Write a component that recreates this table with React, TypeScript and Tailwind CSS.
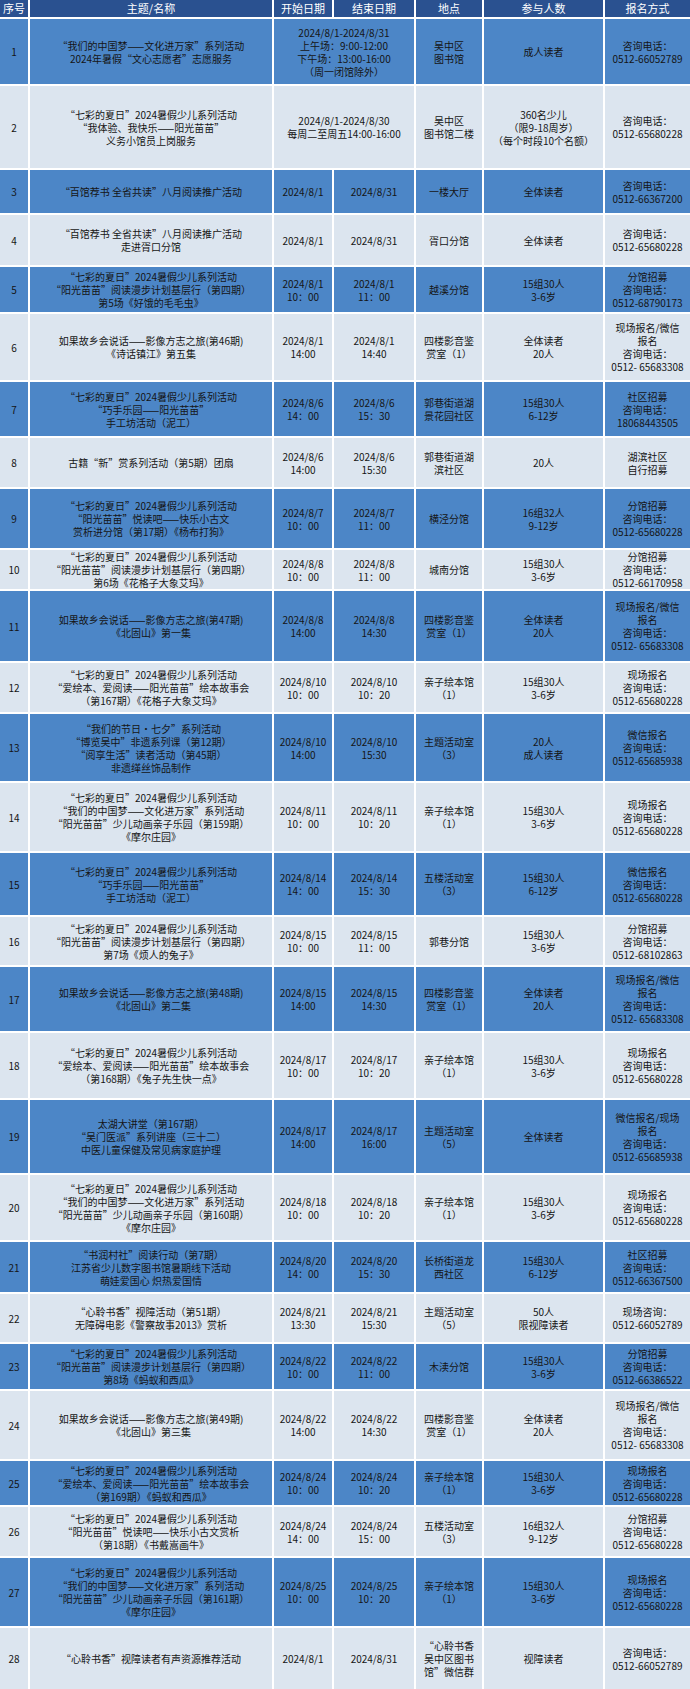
import * as React from 'react';

type Row = {
  no: string;
  h: string;
  title: string[];
  start: string[];
  end?: string[];
  place: string[];
  people: string[];
  signup: string[];
};

const rows: Row[] = [
  {
    no: '1',
    h: 'h-[65px]',
    title: ['“我们的中国梦——文化进万家”系列活动', '2024年暑假“文心志愿者”志愿服务'],
    start: ['2024/8/1-2024/8/31', '上午场：9:00-12:00', '下午场：13:00-16:00', '（周一闭馆除外）'],
    place: ['吴中区', '图书馆'],
    people: ['成人读者'],
    signup: ['咨询电话：', '0512-66052789'],
  },
  {
    no: '2',
    h: 'h-[82px]',
    title: ['“七彩的夏日”2024暑假少儿系列活动', '“我体验、我快乐——阳光苗苗”', '义务小馆员上岗服务'],
    start: ['2024/8/1-2024/8/30', '每周二至周五14:00-16:00'],
    place: ['吴中区', '图书馆二楼'],
    people: ['360名少儿', '（限9-18周岁）', '（每个时段10个名额）'],
    signup: ['咨询电话：', '0512-65680228'],
  },
  {
    no: '3',
    h: 'h-[43px]',
    title: ['“百馆荐书 全省共读”八月阅读推广活动'],
    start: ['2024/8/1'],
    end: ['2024/8/31'],
    place: ['一楼大厅'],
    people: ['全体读者'],
    signup: ['咨询电话：', '0512-66367200'],
  },
  {
    no: '4',
    h: 'h-[50px]',
    title: ['“百馆荐书 全省共读”八月阅读推广活动', '走进胥口分馆'],
    start: ['2024/8/1'],
    end: ['2024/8/31'],
    place: ['胥口分馆'],
    people: ['全体读者'],
    signup: ['咨询电话：', '0512-65680228'],
  },
  {
    no: '5',
    h: 'h-[45px]',
    title: ['“七彩的夏日”2024暑假少儿系列活动', '“阳光苗苗”阅读漫步计划基层行（第四期）', '第5场《好饿的毛毛虫》'],
    start: ['2024/8/1', '10：00'],
    end: ['2024/8/1', '11：00'],
    place: ['越溪分馆'],
    people: ['15组30人', '3-6岁'],
    signup: ['分馆招募', '咨询电话：', '0512-68790173'],
  },
  {
    no: '6',
    h: 'h-[66px]',
    title: ['如果故乡会说话——影像方志之旅(第46期)', '《诗话镇江》第五集'],
    start: ['2024/8/1', '14:00'],
    end: ['2024/8/1', '14:40'],
    place: ['四楼影音鉴', '赏室（1）'],
    people: ['全体读者', '20人'],
    signup: ['现场报名/微信', '报名', '咨询电话：', '0512- 65683308'],
  },
  {
    no: '7',
    h: 'h-[54px]',
    title: ['“七彩的夏日”2024暑假少儿系列活动', '“巧手乐园——阳光苗苗”', '手工坊活动（泥工）'],
    start: ['2024/8/6', '14：00'],
    end: ['2024/8/6', '15：30'],
    place: ['郭巷街道湖', '景花园社区'],
    people: ['15组30人', '6-12岁'],
    signup: ['社区招募', '咨询电话：', '18068443505'],
  },
  {
    no: '8',
    h: 'h-[49px]',
    title: ['古籍“新”赏系列活动（第5期）团扇'],
    start: ['2024/8/6', '14:00'],
    end: ['2024/8/6', '15:30'],
    place: ['郭巷街道湖', '滨社区'],
    people: ['20人'],
    signup: ['湖滨社区', '自行招募'],
  },
  {
    no: '9',
    h: 'h-[59px]',
    title: ['“七彩的夏日”2024暑假少儿系列活动', '“阳光苗苗”悦读吧——快乐小古文', '赏析进分馆（第17期）《杨布打狗》'],
    start: ['2024/8/7', '10：00'],
    end: ['2024/8/7', '11：00'],
    place: ['横泾分馆'],
    people: ['16组32人', '9-12岁'],
    signup: ['分馆招募', '咨询电话：', '0512-65680228'],
  },
  {
    no: '10',
    h: 'h-[39px]',
    title: ['“七彩的夏日”2024暑假少儿系列活动', '“阳光苗苗”阅读漫步计划基层行（第四期）', '第6场《花格子大象艾玛》'],
    start: ['2024/8/8', '10：00'],
    end: ['2024/8/8', '11：00'],
    place: ['城南分馆'],
    people: ['15组30人', '3-6岁'],
    signup: ['分馆招募', '咨询电话：', '0512-66170958'],
  },
  {
    no: '11',
    h: 'h-[70px]',
    title: ['如果故乡会说话——影像方志之旅(第47期)', '《北固山》第一集'],
    start: ['2024/8/8', '14:00'],
    end: ['2024/8/8', '14:30'],
    place: ['四楼影音鉴', '赏室（1）'],
    people: ['全体读者', '20人'],
    signup: ['现场报名/微信', '报名', '咨询电话：', '0512- 65683308'],
  },
  {
    no: '12',
    h: 'h-[49px]',
    title: ['“七彩的夏日”2024暑假少儿系列活动', '“爱绘本、爱阅读——阳光苗苗”绘本故事会', '（第167期）《花格子大象艾玛》'],
    start: ['2024/8/10', '10：00'],
    end: ['2024/8/10', '10：20'],
    place: ['亲子绘本馆', '（1）'],
    people: ['15组30人', '3-6岁'],
    signup: ['现场报名', '咨询电话：', '0512-65680228'],
  },
  {
    no: '13',
    h: 'h-[67px]',
    title: ['“我们的节日·七夕”系列活动', '“博览吴中”非遗系列课（第12期）', '“阅享生活”读者活动（第45期）', '非遗缂丝饰品制作'],
    start: ['2024/8/10', '14:00'],
    end: ['2024/8/10', '15:30'],
    place: ['主题活动室', '（3）'],
    people: ['20人', '成人读者'],
    signup: ['微信报名', '咨询电话：', '0512-65685938'],
  },
  {
    no: '14',
    h: 'h-[68px]',
    title: ['“七彩的夏日”2024暑假少儿系列活动', '“我们的中国梦——文化进万家”系列活动', '“阳光苗苗”少儿动画亲子乐园（第159期）', '《摩尔庄园》'],
    start: ['2024/8/11', '10：00'],
    end: ['2024/8/11', '10：20'],
    place: ['亲子绘本馆', '（1）'],
    people: ['15组30人', '3-6岁'],
    signup: ['现场报名', '咨询电话：', '0512-65680228'],
  },
  {
    no: '15',
    h: 'h-[62px]',
    title: ['“七彩的夏日”2024暑假少儿系列活动', '“巧手乐园——阳光苗苗”', '手工坊活动（泥工）'],
    start: ['2024/8/14', '14：00'],
    end: ['2024/8/14', '15：30'],
    place: ['五楼活动室', '（3）'],
    people: ['15组30人', '6-12岁'],
    signup: ['微信报名', '咨询电话：', '0512-65680228'],
  },
  {
    no: '16',
    h: 'h-[48px]',
    title: ['“七彩的夏日”2024暑假少儿系列活动', '“阳光苗苗”阅读漫步计划基层行（第四期）', '第7场《烦人的兔子》'],
    start: ['2024/8/15', '10：00'],
    end: ['2024/8/15', '11：00'],
    place: ['郭巷分馆'],
    people: ['15组30人', '3-6岁'],
    signup: ['分馆招募', '咨询电话：', '0512-68102863'],
  },
  {
    no: '17',
    h: 'h-[64px]',
    title: ['如果故乡会说话——影像方志之旅(第48期)', '《北固山》第二集'],
    start: ['2024/8/15', '14:00'],
    end: ['2024/8/15', '14:30'],
    place: ['四楼影音鉴', '赏室（1）'],
    people: ['全体读者', '20人'],
    signup: ['现场报名/微信', '报名', '咨询电话：', '0512- 65683308'],
  },
  {
    no: '18',
    h: 'h-[65px]',
    title: ['“七彩的夏日”2024暑假少儿系列活动', '“爱绘本、爱阅读——阳光苗苗”绘本故事会', '（第168期）《兔子先生快一点》'],
    start: ['2024/8/17', '10：00'],
    end: ['2024/8/17', '10：20'],
    place: ['亲子绘本馆', '（1）'],
    people: ['15组30人', '3-6岁'],
    signup: ['现场报名', '咨询电话：', '0512-65680228'],
  },
  {
    no: '19',
    h: 'h-[73px]',
    title: ['太湖大讲堂（第167期）', '“吴门医派”系列讲座（三十二）', '中医儿童保健及常见病家庭护理'],
    start: ['2024/8/17', '14:00'],
    end: ['2024/8/17', '16:00'],
    place: ['主题活动室', '（5）'],
    people: ['全体读者'],
    signup: ['微信报名/现场', '报名', '咨询电话：', '0512-65685938'],
  },
  {
    no: '20',
    h: 'h-[65px]',
    title: ['“七彩的夏日”2024暑假少儿系列活动', '“我们的中国梦——文化进万家”系列活动', '“阳光苗苗”少儿动画亲子乐园（第160期）', '《摩尔庄园》'],
    start: ['2024/8/18', '10：00'],
    end: ['2024/8/18', '10：20'],
    place: ['亲子绘本馆', '（1）'],
    people: ['15组30人', '3-6岁'],
    signup: ['现场报名', '咨询电话：', '0512-65680228'],
  },
  {
    no: '21',
    h: 'h-[50px]',
    title: ['“书润村社”阅读行动（第7期）', '江苏省少儿数字图书馆暑期线下活动', '萌娃爱国心 炽热爱国情'],
    start: ['2024/8/20', '14：00'],
    end: ['2024/8/20', '15：30'],
    place: ['长桥街道龙', '西社区'],
    people: ['15组30人', '6-12岁'],
    signup: ['社区招募', '咨询电话：', '0512-66367500'],
  },
  {
    no: '22',
    h: 'h-[48px]',
    title: ['“心聆书香”视障活动（第51期）', '无障碍电影《警察故事2013》赏析'],
    start: ['2024/8/21', '13:30'],
    end: ['2024/8/21', '15:30'],
    place: ['主题活动室', '（5）'],
    people: ['50人', '限视障读者'],
    signup: ['现场咨询：', '0512-66052789'],
  },
  {
    no: '23',
    h: 'h-[45px]',
    title: ['“七彩的夏日”2024暑假少儿系列活动', '“阳光苗苗”阅读漫步计划基层行（第四期）', '第8场《蚂蚁和西瓜》'],
    start: ['2024/8/22', '10：00'],
    end: ['2024/8/22', '11：00'],
    place: ['木渎分馆'],
    people: ['15组30人', '3-6岁'],
    signup: ['分馆招募', '咨询电话：', '0512-66386522'],
  },
  {
    no: '24',
    h: 'h-[68px]',
    title: ['如果故乡会说话——影像方志之旅(第49期)', '《北固山》第三集'],
    start: ['2024/8/22', '14:00'],
    end: ['2024/8/22', '14:30'],
    place: ['四楼影音鉴', '赏室（1）'],
    people: ['全体读者', '20人'],
    signup: ['现场报名/微信', '报名', '咨询电话：', '0512- 65683308'],
  },
  {
    no: '25',
    h: 'h-[44px]',
    title: ['“七彩的夏日”2024暑假少儿系列活动', '“爱绘本、爱阅读——阳光苗苗”绘本故事会', '（第169期）《蚂蚁和西瓜》'],
    start: ['2024/8/24', '10：00'],
    end: ['2024/8/24', '10：20'],
    place: ['亲子绘本馆', '（1）'],
    people: ['15组30人', '3-6岁'],
    signup: ['现场报名', '咨询电话：', '0512-65680228'],
  },
  {
    no: '26',
    h: 'h-[49px]',
    title: ['“七彩的夏日”2024暑假少儿系列活动', '“阳光苗苗”悦读吧——快乐小古文赏析', '（第18期）《书戴嵩画牛》'],
    start: ['2024/8/24', '14：00'],
    end: ['2024/8/24', '15：00'],
    place: ['五楼活动室', '（3）'],
    people: ['16组32人', '9-12岁'],
    signup: ['分馆招募', '咨询电话：', '0512-65680228'],
  },
  {
    no: '27',
    h: 'h-[68px]',
    title: ['“七彩的夏日”2024暑假少儿系列活动', '“我们的中国梦——文化进万家”系列活动', '“阳光苗苗”少儿动画亲子乐园（第161期）', '《摩尔庄园》'],
    start: ['2024/8/25', '10：00'],
    end: ['2024/8/25', '10：20'],
    place: ['亲子绘本馆', '（1）'],
    people: ['15组30人', '3-6岁'],
    signup: ['现场报名', '咨询电话：', '0512-65680228'],
  },
  {
    no: '28',
    h: 'h-[61px]',
    title: ['“心聆书香”视障读者有声资源推荐活动'],
    start: ['2024/8/1'],
    end: ['2024/8/31'],
    place: ['“心聆书香', '吴中区图书', '馆”微信群'],
    people: ['视障读者'],
    signup: ['咨询电话：', '0512-66052789'],
  },
];

const cols = 'grid grid-cols-[28px_242px_58px_80px_66px_119px_1fr] gap-x-[2px]';

function Cell({ lines, className = '' }: { lines: string[]; className?: string }) {
  return (
    <div className={`flex flex-col items-center justify-center text-center whitespace-nowrap ${className}`}>
      {lines.map((l, i) => (
        <span key={i}>{l}</span>
      ))}
    </div>
  );
}

export default function App() {
  return (
    <div
      className="w-[690px] bg-white flex flex-col gap-y-[2px] text-[10px] leading-[13px] text-[#151515]"
      style={{ fontFamily: '"Noto Sans CJK SC", "Liberation Sans", sans-serif' }}
    >
      <div className={`${cols} h-[17px] text-[11px] leading-[17px] text-white`}>
        {['序号', '主题/名称', '开始日期', '结束日期', '地点', '参与人数', '报名方式'].map((t) => (
          <div key={t} className="bg-[#2a5190] text-center">{t}</div>
        ))}
      </div>
      {rows.map((r, idx) => {
        const bg = idx % 2 === 0 ? 'bg-[#4c86c7]' : 'bg-[#dce5ef]';
        return (
          <div key={r.no} className={`${cols} ${r.h}`}>
            <Cell lines={[r.no]} className={bg} />
            <Cell lines={r.title} className={bg} />
            {r.end ? (
              <>
                <Cell lines={r.start} className={bg} />
                <Cell lines={r.end} className={bg} />
              </>
            ) : (
              <Cell lines={r.start} className={`${bg} col-span-2`} />
            )}
            <Cell lines={r.place} className={bg} />
            <Cell lines={r.people} className={bg} />
            <Cell lines={r.signup} className={bg} />
          </div>
        );
      })}
    </div>
  );
}
